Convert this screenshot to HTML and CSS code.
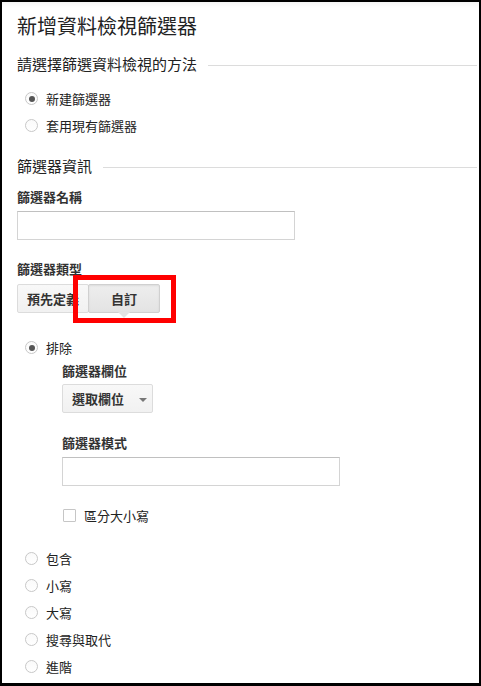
FILE: index.html
```html
<!DOCTYPE html>
<html lang="zh-Hant">
<head>
    <meta charset="UTF-8">
    <meta name="viewport" content="width=device-width, initial-scale=1.0">
    <title>新增資料檢視篩選器</title>
    <link rel="stylesheet" href="styles.css">
</head>
<body>
    <div class="frame">
        <h1 class="title">新增資料檢視篩選器</h1>

        <div class="section-head">
            <span>請選擇篩選資料檢視的方法</span>
        </div>
        <div class="radio-group method">
            <label class="radio-row"><span class="radio checked"></span>新建篩選器</label>
            <label class="radio-row"><span class="radio"></span>套用現有篩選器</label>
        </div>

        <div class="section-head info">
            <span>篩選器資訊</span>
        </div>
        <div class="field-label name-label">篩選器名稱</div>
        <div class="text-input name-input"></div>

        <div class="field-label type-label">篩選器類型</div>
        <div class="toggle">
            <div class="toggle-btn">預先定義</div>
            <div class="toggle-btn selected">自訂</div>
            <div class="highlight"></div>
        </div>

        <div class="radio-group exclude">
            <label class="radio-row"><span class="radio checked"></span>排除</label>
        </div>
        <div class="sub">
            <div class="field-label col-label">篩選器欄位</div>
            <div class="dropdown">選取欄位<span class="caret"></span></div>
            <div class="field-label pattern-label">篩選器模式</div>
            <div class="text-input pattern-input"></div>
            <label class="check-row"><span class="checkbox"></span>區分大小寫</label>
        </div>

        <div class="radio-group others">
            <label class="radio-row"><span class="radio"></span>包含</label>
            <label class="radio-row"><span class="radio"></span>小寫</label>
            <label class="radio-row"><span class="radio"></span>大寫</label>
            <label class="radio-row"><span class="radio"></span>搜尋與取代</label>
            <label class="radio-row"><span class="radio"></span>進階</label>
        </div>
    </div>
</body>
</html>
```

FILE: styles.css
```css
body {
    margin: 0;
    padding: 0;
    background-color: #fff;
    font-family: 'Noto Sans CJK TC', 'Liberation Sans', sans-serif;
    font-size: 13px;
    color: #222;
}

.frame {
    box-sizing: border-box;
    width: 481px;
    height: 686px;
    border: 2px solid #000;
    border-bottom-width: 3px;
    padding: 0 15px;
    background-color: #fff;
    box-shadow: inset 0 7px 6px -6px rgba(0, 0, 0, 0.07);
    overflow: hidden;
}

.title {
    margin: 10px 0 0;
    font-size: 20px;
    font-weight: normal;
    line-height: 28px;
    color: #222;
}

/* heading with a rule to the right */
.section-head {
    display: flex;
    align-items: center;
    margin-top: 13px;
    margin-right: -13px;
    height: 20px;
    font-size: 15px;
    color: #222;
}

.section-head::after {
    content: "";
    flex: 1;
    height: 1px;
    margin-left: 11px;
    margin-top: 4px;
    background-color: #dcdcdc;
}

.section-head.info {
    margin-top: 16px;
}

.radio-group {
    display: flex;
    flex-direction: column;
    padding-left: 8px;
}

.radio-group.method {
    margin-top: 12px;
}

.radio-group.exclude {
    margin-top: 21px;
}

.radio-group.others {
    margin-top: 21px;
}

.radio-row {
    display: flex;
    align-items: center;
    height: 27px;
    gap: 8px;
    color: #222;
}

.radio {
    box-sizing: border-box;
    width: 13px;
    height: 13px;
    border: 1px solid #c8c8c8;
    border-radius: 50%;
    background: linear-gradient(#fafafa, #fff);
    display: flex;
    align-items: center;
    justify-content: center;
}

.radio.checked::after {
    content: "";
    width: 6px;
    height: 6px;
    border-radius: 50%;
    background-color: #555;
}

.field-label {
    font-weight: bold;
    line-height: 18px;
    color: #333;
}

.name-label {
    margin-top: 13px;
}

.type-label {
    margin-top: 20px;
}

.text-input {
    box-sizing: border-box;
    width: 278px;
    height: 29px;
    border: 1px solid #d4d4d4;
    border-top-color: #c0c0c0;
    background-color: #fff;
}

.name-input {
    margin-top: 5px;
}

.toggle {
    position: relative;
    display: flex;
    margin-top: 6px;
    height: 29px;
}

.toggle-btn {
    box-sizing: border-box;
    height: 29px;
    padding: 0 9px;
    border: 1px solid #dcdcdc;
    border-radius: 2px;
    background: linear-gradient(#f8f8f8, #f1f1f1);
    font-weight: bold;
    color: #333;
    display: flex;
    align-items: center;
    white-space: nowrap;
}

.toggle-btn.selected {
    position: relative;
    width: 72px;
    justify-content: center;
    margin-left: -1px;
    background: linear-gradient(#eee, #e3e3e3);
    border-color: #d0d0d0;
    box-shadow: inset 0 1px 2px rgba(0, 0, 0, 0.08);
}

.toggle-btn.selected::after {
    content: "";
    position: absolute;
    left: 50%;
    bottom: -6px;
    margin-left: -6px;
    border-left: 6px solid transparent;
    border-right: 6px solid transparent;
    border-top: 6px solid #e3e3e3;
}

.highlight {
    position: absolute;
    left: 56px;
    top: -9px;
    width: 103px;
    height: 48px;
    box-sizing: border-box;
    border: 5px solid #f00;
}

.sub {
    padding-left: 45px;
}

.col-label {
    margin-top: 1px;
}

.dropdown {
    box-sizing: border-box;
    display: flex;
    align-items: center;
    width: 91px;
    height: 29px;
    margin-top: 4px;
    padding-left: 9px;
    border: 1px solid #dcdcdc;
    border-radius: 2px;
    background: linear-gradient(#f8f8f8, #f1f1f1);
    font-weight: bold;
    color: #333;
}

.caret {
    margin-left: 15px;
    margin-top: 2px;
    border-left: 4px solid transparent;
    border-right: 4px solid transparent;
    border-top: 4px solid #777;
}

.pattern-label {
    margin-top: 21px;
}

.pattern-input {
    margin-top: 5px;
}

.check-row {
    display: flex;
    align-items: center;
    gap: 8px;
    height: 18px;
    margin-top: 20px;
    padding-left: 1px;
    color: #222;
}

.checkbox {
    box-sizing: border-box;
    width: 13px;
    height: 13px;
    border: 1px solid #c6c6c6;
    border-radius: 1px;
    background-color: #fff;
}
```
